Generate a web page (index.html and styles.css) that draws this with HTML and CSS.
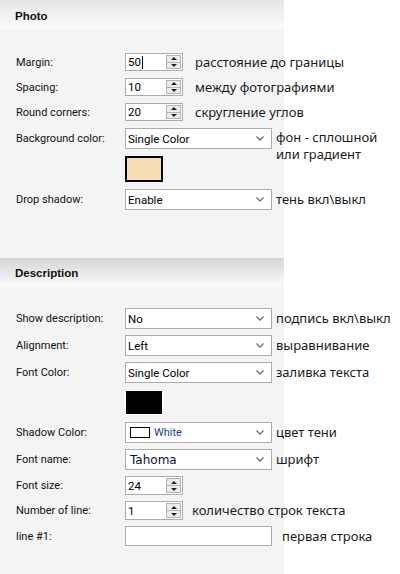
FILE: index.html
```html
<!DOCTYPE html>
<html>
<head>
<meta charset="utf-8">
<link rel="stylesheet" href="styles.css">
</head>
<body>
<div class="panel">
  <div class="header top">Photo</div>
  <div class="section photo">
    <div class="row spin-row">
      <span class="label">Margin:</span>
      <div class="spinner"><span class="val">50<span class="caret"></span></span><span class="btns"><span class="up"></span><span class="down"></span></span></div>
      <span class="note n-spin">расстояние до границы</span>
    </div>
    <div class="row spin-row">
      <span class="label">Spacing:</span>
      <div class="spinner"><span class="val">10</span><span class="btns"><span class="up"></span><span class="down"></span></span></div>
      <span class="note n-spin">между фотографиями</span>
    </div>
    <div class="row spin-row">
      <span class="label">Round corners:</span>
      <div class="spinner"><span class="val">20</span><span class="btns"><span class="up"></span><span class="down"></span></span></div>
      <span class="note n-spin">скругление углов</span>
    </div>
    <div class="row dd-row">
      <span class="label">Background color:</span>
      <div class="dropdown"><span class="val">Single Color</span><svg class="chev" width="8" height="5" viewBox="0 0 8 5"><path d="M0.5 0.5 L4 4 L7.5 0.5" fill="none" stroke="#6d6d6d" stroke-width="1.3"/></svg></div>
      <span class="note n-dd two">фон - сплошной<br>или градиент</span>
    </div>
    <div class="row sw-row1">
      <span class="label"></span>
      <div class="swatch wheat"></div>
    </div>
    <div class="row dd-row">
      <span class="label">Drop shadow:</span>
      <div class="dropdown"><span class="val">Enable</span><svg class="chev" width="8" height="5" viewBox="0 0 8 5"><path d="M0.5 0.5 L4 4 L7.5 0.5" fill="none" stroke="#6d6d6d" stroke-width="1.3"/></svg></div>
      <span class="note n-dd">тень вкл\выкл</span>
    </div>
  </div>
  <div class="header">Description</div>
  <div class="section desc">
    <div class="row dd-row">
      <span class="label">Show description:</span>
      <div class="dropdown"><span class="val">No</span><svg class="chev" width="8" height="5" viewBox="0 0 8 5"><path d="M0.5 0.5 L4 4 L7.5 0.5" fill="none" stroke="#6d6d6d" stroke-width="1.3"/></svg></div>
      <span class="note n-dd">подпись вкл\выкл</span>
    </div>
    <div class="row dd-row">
      <span class="label">Alignment:</span>
      <div class="dropdown"><span class="val">Left</span><svg class="chev" width="8" height="5" viewBox="0 0 8 5"><path d="M0.5 0.5 L4 4 L7.5 0.5" fill="none" stroke="#6d6d6d" stroke-width="1.3"/></svg></div>
      <span class="note n-dd">выравнивание</span>
    </div>
    <div class="row dd-row">
      <span class="label">Font Color:</span>
      <div class="dropdown"><span class="val">Single Color</span><svg class="chev" width="8" height="5" viewBox="0 0 8 5"><path d="M0.5 0.5 L4 4 L7.5 0.5" fill="none" stroke="#6d6d6d" stroke-width="1.3"/></svg></div>
      <span class="note n-dd">заливка текста</span>
    </div>
    <div class="row sw-row2">
      <span class="label"></span>
      <div class="swatch black"></div>
    </div>
    <div class="row dd-row2">
      <span class="label">Shadow Color:</span>
      <div class="dropdown"><span class="colorbox"></span><span class="val blue">White</span><svg class="chev" width="8" height="5" viewBox="0 0 8 5"><path d="M0.5 0.5 L4 4 L7.5 0.5" fill="none" stroke="#6d6d6d" stroke-width="1.3"/></svg></div>
      <span class="note n-dd">цвет тени</span>
    </div>
    <div class="row dd-row2">
      <span class="label">Font name:</span>
      <div class="dropdown"><span class="val font">Tahoma</span><svg class="chev" width="8" height="5" viewBox="0 0 8 5"><path d="M0.5 0.5 L4 4 L7.5 0.5" fill="none" stroke="#6d6d6d" stroke-width="1.3"/></svg></div>
      <span class="note n-dd">шрифт</span>
    </div>
    <div class="row spin-row2">
      <span class="label">Font size:</span>
      <div class="spinner"><span class="val">24</span><span class="btns"><span class="up"></span><span class="down"></span></span></div>
    </div>
    <div class="row spin-row2">
      <span class="label">Number of line:</span>
      <div class="spinner"><span class="val">1</span><span class="btns"><span class="up"></span><span class="down"></span></span></div>
      <span class="note n-spin2">количество строк текста</span>
    </div>
    <div class="row txt-row">
      <span class="label">line #1:</span>
      <div class="textbox"></div>
      <span class="note n-txt">первая строка</span>
    </div>
  </div>
</div>
</body>
</html>
```
FILE: styles.css
```css
html, body {
  margin: 0;
  padding: 0;
  background: #ffffff;
}
body {
  width: 400px;
  height: 574px;
  overflow: hidden;
}
.panel {
  width: 284px;
  height: 574px;
  background: #f4f4f4;
}
.header {
  height: 29px;
  box-sizing: border-box;
  padding-left: 15px;
  display: flex;
  align-items: center;
  font-family: "Liberation Sans", Arial, sans-serif;
  font-weight: bold;
  font-size: 11.5px;
  color: #111;
  background: linear-gradient(#d6d6d6, #fbfbfb);
}
.header.top {
  background: linear-gradient(#e6e6e6, #fbfbfb);
  padding-top: 2px;
}
.section {
  display: flex;
  flex-direction: column;
  box-sizing: border-box;
}
.photo {
  height: 229px;
  padding-top: 24px;
  gap: 7px;
}
.desc {
  padding-top: 21px;
  gap: 6px;
}
.row {
  display: flex;
  align-items: center;
  white-space: nowrap;
  position: relative;
}
.spin-row { height: 18px; }
.dd-row { height: 21px; }
.dd-row2 { height: 21px; }
.spin-row2 { height: 19px; }
.txt-row { height: 20px; }
.sw-row1 { height: 26px; }
.sw-row2 { height: 27px; align-items: flex-start; }
.label {
  width: 109px;
  padding-left: 16px;
  flex: none;
  font-family: Roboto, "Liberation Sans", sans-serif;
  font-size: 11px;
  color: #111;
}
.spinner {
  width: 58px;
  height: 100%;
  box-sizing: border-box;
  border: 1px solid #acacac;
  background: #fff;
  display: flex;
  flex: none;
}
.spinner .val {
  flex: 1;
  display: flex;
  align-items: center;
  padding-left: 2px;
  font-family: Roboto, "Liberation Sans", sans-serif;
  font-size: 11.5px;
  color: #000;
}
.caret {
  display: inline-block;
  width: 1px;
  height: 13px;
  background: #000;
  margin-left: 1px;
}
.btns {
  width: 15px;
  margin: 1px 1px 1px 0;
  display: flex;
  flex-direction: column;
  border: 1px solid #b4b4b4;
  box-sizing: border-box;
  background: #ececec;
}
.btns span {
  flex: 1;
  display: flex;
  align-items: center;
  justify-content: center;
}
.btns .up { border-bottom: 1px solid #b4b4b4; }
.btns .up::after {
  content: "";
  border-left: 3px solid transparent;
  border-right: 3px solid transparent;
  border-bottom: 3px solid #222;
}
.btns .down::after {
  content: "";
  border-left: 3px solid transparent;
  border-right: 3px solid transparent;
  border-top: 3px solid #222;
}
.dropdown {
  width: 147px;
  height: 100%;
  box-sizing: border-box;
  border: 1px solid #acacac;
  background: #fff;
  display: flex;
  align-items: center;
  flex: none;
  position: relative;
}
.dropdown .val {
  flex: 1;
  padding-left: 2px;
  font-family: Roboto, "Liberation Sans", sans-serif;
  font-size: 11.5px;
  color: #000;
}
.dropdown .val.blue {
  color: #1d3f8f;
  padding-left: 4px;
  font-size: 11px;
}
.dropdown .val.font {
  font-family: "DejaVu Sans", Verdana, sans-serif;
  font-size: 12px;
  color: #101030;
  padding-left: 4px;
}
.colorbox {
  width: 20px;
  height: 11px;
  box-sizing: border-box;
  border: 1px solid #000;
  background: #fff;
  margin-left: 4px;
  flex: none;
}
.chev {
  margin-right: 7px;
  flex: none;
}
.textbox {
  width: 147px;
  height: 100%;
  box-sizing: border-box;
  border: 1px solid #acacac;
  background: #fff;
  flex: none;
}
.swatch {
  box-sizing: border-box;
  flex: none;
}
.swatch.wheat {
  width: 38px;
  height: 26px;
  border: 2px solid #000;
  background: #f5deb3;
}
.swatch.black {
  width: 38px;
  height: 25px;
  border: 1px solid #fff;
  background: #000;
  margin-top: 1px;
}
.note {
  font-family: "Noto Sans", "Open Sans", sans-serif;
  font-size: 13px;
  color: #1a1a1a;
  line-height: 17px;
}
.n-spin { margin-left: 12px; }
.n-spin2 { margin-left: 9px; }
.n-dd { margin-left: 4px; }
.n-txt { margin-left: 10px; }
.note.two {
  align-self: flex-start;
  margin-top: 1px;
  height: 21px;
}
```
